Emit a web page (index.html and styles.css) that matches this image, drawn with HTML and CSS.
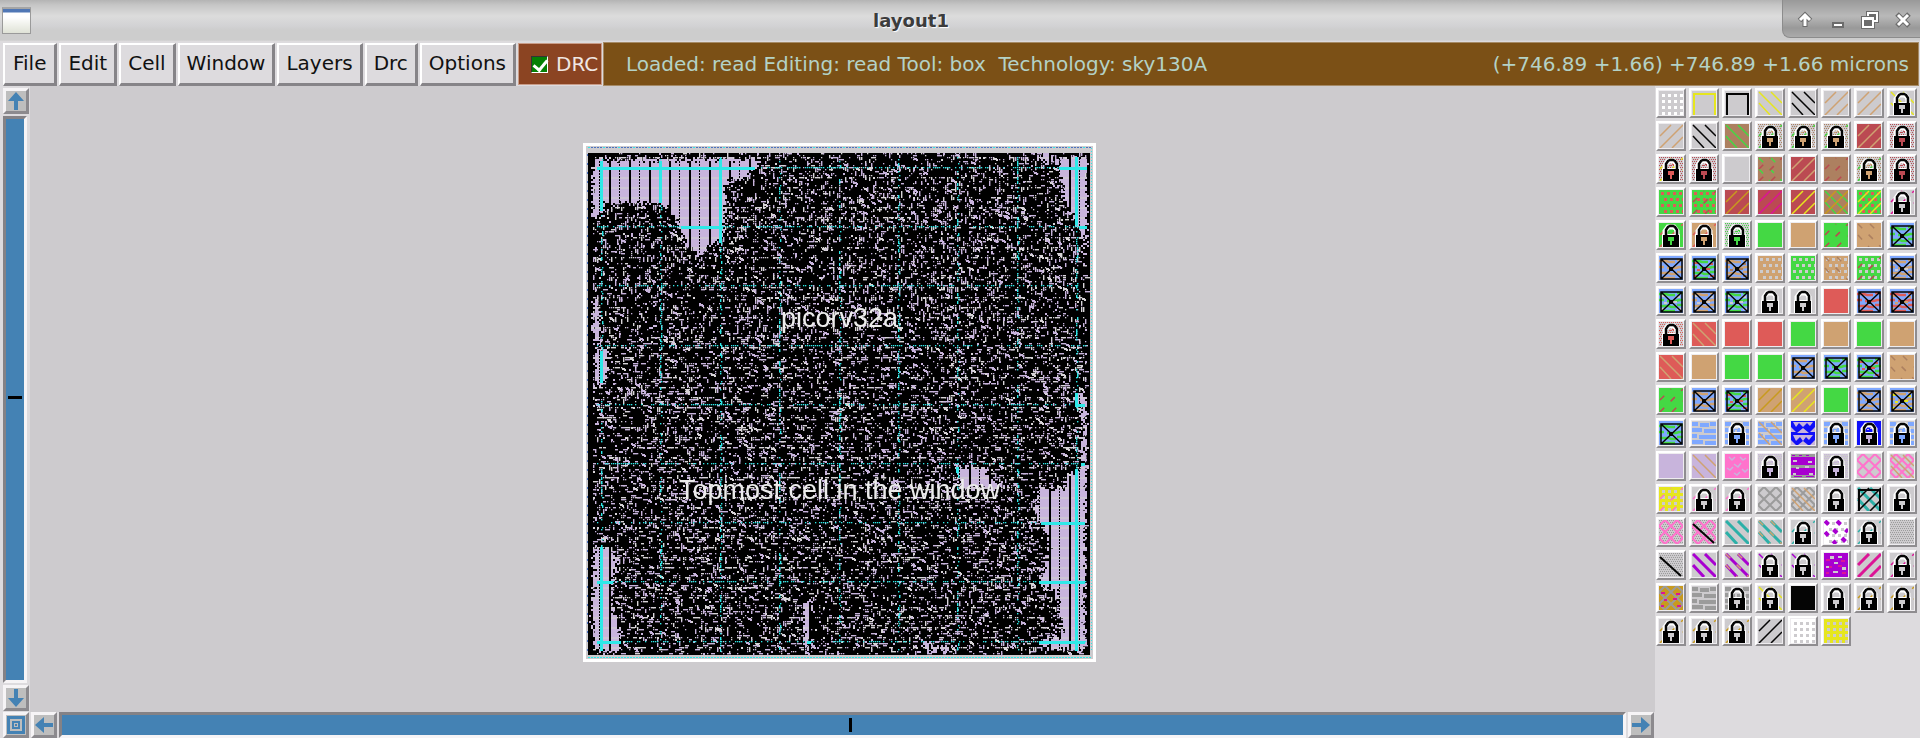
FILE: index.html
```html
<!DOCTYPE html>
<html lang="en">
<head>
<meta charset="utf-8">
<title>layout1</title>
<link rel="stylesheet" href="styles.css">
</head>
<body>
<header class="titlebar">
  <span class="app-icon"></span>
  <h1 class="title">layout1</h1>
  <div class="controls">
    <button class="control" aria-label="Shade"><svg viewBox="0 0 20 20"><path class="halo" d="M10 17V5M4.500 10.500 10 5l5.500 5.500"/><path class="line" d="M10 16V5M5 10l5-5 5 5"/></svg></button>
    <button class="control" aria-label="Minimize"><svg viewBox="0 0 20 20"><path class="edge" d="M4 12h12v6H4z"/><path class="solid" d="M6 14h8v2H6z"/></svg></button>
    <button class="control" aria-label="Restore"><svg viewBox="0 0 20 20"><path class="edge" d="M6 1h13v12h-4v6H1V6h5z"/><path class="ring" d="M8 6V3h9v8h-3M3 8h10v9H3z"/><path class="ring" d="M3 9h10"/></svg></button>
    <button class="control" aria-label="Close"><svg viewBox="0 0 20 20"><path class="halo" d="m4 4 12 12M16 4 4 16"/><path class="line" d="m5 5 10 10M15 5 5 15"/></svg></button>
  </div>
</header>
<nav class="menubar">
  <button class="menu">File</button>
  <button class="menu">Edit</button>
  <button class="menu">Cell</button>
  <button class="menu">Window</button>
  <button class="menu">Layers</button>
  <button class="menu">Drc</button>
  <button class="menu">Options</button>
  <label class="drc"><input type="checkbox" class="drc-box" checked>DRC</label>
  <div class="status">
    <span class="status-text">Loaded: read Editing: read Tool: box  Technology: sky130A</span>
    <span class="status-text">(+746.89 +1.66) +746.89 +1.66 microns</span>
  </div>
</nav>
<main class="workspace">
  <div class="rail">
    <button class="arrow" aria-label="Scroll up"><svg viewBox="0 0 20 20"><path d="M10 1l8 9h-6v9H8v-9H2z"/></svg></button>
    <div class="bar bar-v" role="scrollbar" aria-label="Vertical" aria-orientation="vertical" aria-controls="view" aria-valuenow="50"><span class="mark mark-v"></span></div>
    <button class="arrow" aria-label="Scroll down"><svg viewBox="0 0 20 20"><path d="M10 19l8-9h-6V1H8v9H2z"/></svg></button>
  </div>
  <section class="view" id="view">
    <div class="die">
      <canvas class="die-art" width="513" height="519"></canvas>
      <span class="cell-name">picorv32a</span>
      <span class="cell-note">Topmost cell in the window</span>
    </div>
  </section>
  <div class="foot">
    <button class="arrow" aria-label="Zoom to fit"><svg viewBox="0 0 20 20"><path d="M1 1h18v18H1zM4 4v12h12V4z" fill-rule="evenodd"/><path d="M6 6h8v8H6zM8 8v4h4V8z" fill-rule="evenodd"/><path d="M9 9h2v2H9z"/></svg></button>
    <button class="arrow" aria-label="Scroll left"><svg viewBox="0 0 20 20"><path d="M1 10l9-8v6h9v4h-9v6z"/></svg></button>
    <div class="bar bar-h" role="scrollbar" aria-label="Horizontal" aria-orientation="horizontal" aria-controls="view" aria-valuenow="50"><span class="mark mark-h"></span></div>
    <button class="arrow" aria-label="Scroll right"><svg viewBox="0 0 20 20"><path d="M19 10l-9-8v6H1v4h9v6z"/></svg></button>
  </div>
  <aside class="palette" id="palette" aria-label="Layers"></aside>
</main>
<script src="script.js"></script>
</body>
</html>
```
FILE: styles.css
```css
* { box-sizing: border-box; }
body {
  margin: 0;
  min-height: 100vh;
  display: flex;
  flex-direction: column;
  background: #dddbde;
  color: #111;
  font-family: "DejaVu Sans", sans-serif;
  font-size: 20px;
}
button { font: inherit; color: inherit; padding: 0; margin: 0; }

.titlebar {
  display: grid;
  grid-template-columns: 138px 1fr 138px;
  height: 42px;
  align-items: start;
  background: linear-gradient(#b4b4b4, #c6c6c6 5px, #dcdcdc 16px, #d2d2d4 26px, #cdcdcd 30px, #cdcdcd 40px, #e2e0e2 42px);
}
.app-icon {
  width: 29px;
  height: 27px;
  margin: 7px 2px;
  border: 1px solid #9a9a9a;
  border-top: 2px solid #a5a5a5;
  background: linear-gradient(#5077b5 3px, #fff 4px, #fff 8px, #dfe2d6);
}
.title {
  margin: 0;
  padding-right: 98px;
  font-size: 18px;
  line-height: 42px;
  text-align: center;
  color: #3c3c3c;
  text-shadow: 1px 1px 1px #fff;
}
.controls {
  display: flex;
  justify-content: space-between;
  align-items: center;
  height: 38px;
  padding: 2px 7px 0 12px;
  border: solid #8c8c8c;
  border-width: 0 0 1px 1px;
  border-bottom-left-radius: 8px;
  background: linear-gradient(#999, #b9b9b9 16px, #999 28px, #ababab);
}
.control { width: 20px; height: 20px; border: 0; background: none; display: flex; }
.control svg { width: 20px; height: 20px; fill: none; }
.halo { stroke: #6c6c6c; stroke-width: 5; }
.line { stroke: #fff; stroke-width: 3; }
.edge { fill: #6c6c6c; }
.solid { fill: #fff; }
.ring { stroke: #fff; stroke-width: 2; }

.menubar { display: flex; gap: 2px; padding: 0 1px 0 3px; height: 44px; }
.menu {
  padding: 0 7px 2px;
  margin-top: 1px;
  background: #dddbde;
  border: solid;
  border-color: #fff #868488 #868488 #fff;
  border-width: 2px 3px 3px 2px;
}
.menu:first-child { padding: 0 8px 2px; }
.drc {
  display: flex;
  align-items: center;
  gap: 8px;
  width: 84px;
  padding: 0 4px 0 12px;
  margin: 1px 0;
  background: #8b4422;
  border: 1px solid #c99c88;
  color: #f0e6e2;
}
.drc-box {
  appearance: none;
  width: 17px;
  height: 17px;
  margin: 0;
  flex: none;
  border: 1px solid;
  border-color: #333 #fff #fff #333;
  background: #058005;
  position: relative;
}
.drc-box:checked::after {
  content: "";
  position: absolute;
  left: 4px;
  top: 0;
  width: 6px;
  height: 11px;
  border: solid #fff;
  border-width: 0 3px 3px 0;
  transform: rotate(40deg);
}
.status {
  flex: 1;
  display: flex;
  justify-content: space-between;
  align-items: center;
  padding: 0 9px 0 22px;
  margin-left: -1px;
  background: #7b5016;
  border: 1px solid #a58a66;
  color: #b4d2c6;
}
.status-text { white-space: pre; }

.workspace {
  flex: 1;
  display: grid;
  grid-template-columns: 30px 1fr 265px;
  grid-template-rows: 1fr 26px;
}
.rail { display: flex; flex-direction: column; gap: 2px; padding: 2px 0 1px 3px; background: #dddbde; }
.view { background: #cdcbce; display: grid; place-content: center; padding: 7px 6px 0 0; }
.foot { grid-column: 1 / 3; grid-row: 2; display: flex; gap: 2px; padding: 0 1px 0 3px; }
.palette {
  grid-column: 3;
  grid-row: 1 / 3;
  display: grid;
  grid-template-columns: repeat(8, 30px);
  gap: 3px;
  align-content: start;
  padding: 2px 0 0 1px;
}
.arrow {
  flex: none;
  width: 26px;
  height: 26px;
  padding: 0;
  background: #bebebe;
  border: 3px solid;
  border-color: #f6f4f6 #8c8a8e #8c8a8e #f6f4f6;
  display: flex;
}
.arrow svg { width: 20px; height: 20px; fill: #4482b4; }
.bar {
  flex: 1;
  display: flex;
  align-items: center;
  justify-content: center;
  background: #4482b4;
  border: 3px solid;
  border-color: #848286 #f6f4f6 #f6f4f6 #848286;
}
.bar-v { width: 24px; padding-bottom: 4px; }
.bar-h { padding-left: 16px; }
.mark { background: #000; }
.mark-v { width: 14px; height: 3px; }
.mark-h { width: 3px; height: 14px; }

.die { position: relative; }
.die-art { display: block; }
.cell-name, .cell-note {
  position: absolute;
  left: 0;
  width: 100%;
  text-align: center;
  font-family: "Liberation Sans", sans-serif;
  font-size: 27px;
  line-height: 30px;
  color: #ececec;
}
.cell-name { top: 160px; }
.cell-note { top: 332px; }

.swatch {
  width: 30px;
  height: 30px;
  padding: 1px;
  background: #eeecef;
  border: 2px solid;
  border-color: #fff #8f8d90 #8f8d90 #fff;
}
.swatch svg { display: block; width: 24px; height: 24px; }
```
FILE: script.js
```js
const INK = {
  A: '#cdcbce', G: '#44d844', T: '#cfa272', B: '#ad8060', R: '#bb4a52', S: '#de5b58',
  U: '#7fa8ff', Y: '#e6e61e', K: '#050505', L: '#c8b4dc', P: '#ff73cc', V: '#a800d0',
  M: '#dc1496', C: '#2cb0a8', W: '#ffffff', D: '#9b9b9b', O: '#c89a1e', N: '#1010f8'
};

const line = (d, c, w, dash) =>
  `<path d="${d}" fill="none" stroke="${c}" stroke-width="${w}"${dash ? ` stroke-dasharray="${dash}"` : ''}/>`;
const SLASH = 'M1 12 12 1M1 24 24 1M13 24 24 13';
const BACK = 'M1 12 12 24M1 1 24 24M13 1 24 12';

function grid(c, size, pitch, shift, start) {
  let d = '';
  for (let r = 0; r * pitch + start < 24; r++) {
    for (let k = 0; k * pitch + start < 24; k++) {
      d += `M${k * pitch + start + (r % 2 ? shift : 0)} ${r * pitch + start}h${size}v${size}h-${size}z`;
    }
  }
  return `<path d="${d}" fill="${c}"/>`;
}

/* One letter per pattern, followed by its ink letter. */
const DRAW = {
  f: c => `<path d="M0 0h24v24H0z" fill="${c}"/>`,
  '/': c => line(SLASH, c, 1.500),
  '\\': c => line(BACK, c, 1.500),
  s: c => line(SLASH, c, 1.500, '6 9'),
  b: c => line(BACK, c, 1.500, '6 9'),
  z: c => line(BACK, c, 3),
  y: c => line(SLASH, c, 3),
  Z: c => line(BACK, c, 4, '5 7'),
  '1': c => line('M1 4 22 23', c, 2),
  d: c => grid(c, 3, 6, 0, 3),
  D: c => grid(c, 3, 6, 3, 2),
  c: c => grid(c, 1, 2, 1, 0),
  x: c => line('M0 6 6 0 24 18 18 24 0 6M0 18 18 0 24 6 6 24z', c, 2),
  t: c => line('M2 24V3h21v21', c, 2),
  w: c => line('M0 5h7l3 1h6M18 4h6M0 11h5M8 12h9l3-1h4M1 17h9l2 1h5M18 16h6M4 22h12', c, 2.500),
  W: c => line('M2 7h4M17 8h4M5 14h3M14 13h4M2 20h3M18 20h4', c, 2),
  h: c => line('M0 3h6M8 4h9M18 3h6M0 9h10M12 10h12M0 15h5M7 16h17M0 21h11M13 22h11', c, 4),
  v: c => `<path d="M2 1h20l-3 4-3-3-4 4-4-4-3 4zM0 6l5 5H0zM24 6v5h-5zM6 12l6-5 6 5zM2 14h20l-4 5-3-3-3 4-3-4-4 4zM0 24v-5l5 5zM24 24v-5l-5 5zM7 24l5-4 5 4z" fill="${c}"/>`,
  q: c => `<path d="M0 3h24v8H0zM0 14h24v7H0zM1 1h3v1H1zM8 1h3v1H8zM15 1h3v1h-3zM3 22h8v1H3zM15 22h8v1h-8z" fill="${c}"/>`,
  k: c => `<path d="M6 3h4v3H6zM14 3h4v2h-4zM10 9h4v2h-4zM2 13h4v2H2zM18 14h4v3h-4zM9 18h5v2H9z" fill="${c}"/>`,
  u: c => line('M4 3l3 3 3-3M15 3l3 3 3-2M9 10l4 3 3-4M2 14l3 2 3-3M17 15l3 3 3-3M9 19l3 2 3-3', c, 1.500),
  X: c => line('M2 23V3h21v20zM2 3l21 20M23 3 2 23', c, 1.500) + `<path d="M10 11h4v4h-4z" fill="${c}"/>`,
  l: c => line('M6 13V8l3-4h6l3 4v5', '#fff', 5) +
    '<path d="M3 11h18v13H3z" fill="#fff"/>' +
    line('M7 12V7l2-3 2-1h3l2 1 2 3v5', '#050505', 2.500) +
    `<path d="M10 8h2v1h-2zM13 7h2v1h-2z" fill="${c}"/>` +
    '<path d="M4 12h16v12H4z" fill="#000"/>' +
    `<path d="M9 14h6v4h-2v4h-2v-4H9z" fill="${c}"/>`
};

const LAYERS = `
dW tY tK \\Y \\K /T /T \\YlA
/T \\K fB\\G cBsGlT cBsGlT cBsGlT fR/T cRlR
cRsYlS cRlR fA fBbGsR fR/T fBsR cBsGlT cRlR
fGDS fGDSsR fR/O fR/M fR/Y fB\\G/O fGDS/Y sMlA
fGsSlG fTsSlT cGlG fG fT fGsR fTbB fUwGXK
fUwTXK fUwGWSXK fUwTWBXK fTDA fGDA fTDAbB fGDAsR fUwTWAXK
fUwGWAXK fUwTWAXK fUwGWAXK lA lA fS fUwSXK fUwSWTXK
cSlS fS\\T fS fS fG fT fG fT
fS\\T fT fG fG fUwTXK fUwGXK fUwGWSXK fTbB
fGsR fUwTXK fUwGWSXK fT/O fT/Y fG fUwTXK fUwTWYXK
fUwGXK hU hUlU hU\\T fNvL hUlU fNlL hUlU
fL fL\\T fPuL cLlL fDqVWA cLlL xP xP\\T
fYdAsP sPlA sPlA xD xD\\T lA zC/KtK lA
cDxP cDxP1K zC zCbT sClA fWDAZV sClA cD
cD1K zV zVbT bVlA bVlA fVkAWM yM sMlA
fOxDWM hD hDlA \\YlA fK lA sOlA sOlA
sOlA sOlA sOlA /K fWdA fYdA`;

function swatch(code) {
  let art = DRAW.f(INK.A);
  for (let i = 0; i < code.length; i += 2) art += DRAW[code[i]](INK[code[i + 1]]);
  return `<svg viewBox="0 0 24 24" aria-hidden="true">${art}</svg>`;
}
document.getElementById('palette').innerHTML = LAYERS.trim().split(/\s+/)
  .map((code, i) => `<button class="swatch" aria-label="Layer ${i + 1}">${swatch(code.replace(/\\\\/g, '\\'))}</button>`)
  .join('');

/* Die view: routed area, empty filler areas and power straps. */
let seed = 7;
const rnd = () => {
  seed = (seed * 1664525 + 1013904223) >>> 0;
  return seed / 4294967296;
};
const ctx = document.querySelector('.die-art').getContext('2d');
const box = (c, x, y, w, h) => { ctx.fillStyle = c; ctx.fillRect(x, y, w, h); };
const LAV = '#c8b4dc', GREY = '#cdcbce', CYAN = '#2ee8e8';

box('#fff', 0, 0, 513, 519);
box(GREY, 3, 3, 507, 513);
box('#000', 5, 10, 502, 502);

const FILLER = [
  [[9, 17], [9, 72], [16, 74], [21, 59], [77, 59], [87, 69], [97, 82], [99, 95], [107, 107], [115, 110], [125, 100], [138, 98], [143, 37], [157, 35], [173, 22], [177, 15]],
  [[473, 14], [477, 37], [483, 62], [491, 75], [495, 85], [499, 97], [502, 119], [503, 97], [503, 14]],
  [[447, 10], [468, 10], [470, 20], [455, 17]],
  [[9, 157], [14, 157], [17, 202], [10, 202]],
  [[10, 207], [25, 207], [23, 232], [12, 247]],
  [[491, 250], [502, 250], [502, 322], [498, 322], [497, 262], [491, 262]],
  [[452, 344], [452, 377], [460, 380], [466, 404], [462, 424], [455, 437], [460, 445], [472, 447], [478, 480], [478, 494], [455, 495], [457, 504], [500, 507], [502, 322], [495, 324], [483, 334], [479, 344]],
  [[373, 322], [400, 323], [405, 335], [426, 344], [376, 344]],
  [[11, 402], [23, 404], [35, 417], [30, 430], [27, 457], [32, 474], [37, 494], [35, 507], [13, 507], [8, 480]],
  [[221, 457], [227, 457], [227, 507], [223, 502], [219, 477]],
  [[338, 499], [371, 502], [366, 507], [341, 507]]
];
const inside = (p, x, y) => {
  let hit = false;
  for (let i = 0, j = p.length - 1; i < p.length; j = i++) {
    const [a, b] = p[i], [c, d] = p[j];
    if ((b > y) !== (d > y) && x < (c - a) * (y - b) / (d - b) + a) hit = !hit;
  }
  return hit;
};
const filler = (x, y) => FILLER.some(p => inside(p, x, y));

for (let y = 10; y < 511; y += 2) {
  const rail = y % 10 === 4;
  for (let x = 6; x < 506; x += 2) {
    const fx = x + (rnd() - 0.5) * 6, fy = y + (rnd() - 0.5) * 6;
    if (filler(fx, fy)) {
      box(rail ? '#cdc4d4' : LAV, x, y, 2, 2);
      continue;
    }
    const p = rail ? 0.380 : 0.200;
    if (x < 9 || x > 502 || rnd() > p) continue;
    const c = rnd() < (rail ? 0.300 : 0.800) ? LAV : '#d8d4d8';
    const kind = rnd();
    const flat = y > 190 ? 0.260 : 0.140;
    if (kind < flat) box(c, x, y, 3 + Math.floor(rnd() * 3), 1.400);
    else if (kind < 0.400) box(c, x, y, 1.400, 3 + Math.floor(rnd() * 3));
    else if (kind < 0.520) box(c, x, y, 2, 2);
    else box(c, x, y, 1.300, 1.300);
    if (rnd() < 0.040) { box(c, x + 1, y + 1, 3, 2); box(c, x + 3, y + 2, 2, 2); }
  }
}

/* Cell row ends cut dotted columns into the filler. */
for (let x = 16, n = 0; x < 505; x += 10, n++) {
  for (let y = 12; y < 510; y += 3) {
    if (!filler(x, y)) continue;
    if (n % 2) box('#000', x, y, 2, 3);
    else box('#000', x, y, 1, 2);
  }
}

for (let i = 0; i < 9; i++) {
  const at = 18 + Math.round(i * 59.400), row = 24 + Math.round(i * 59.200);
  for (let t = 14; t < 508; t += 2) {
    if (filler(at, t)) box(CYAN, at - 1, t, 3, 2);
    else if (rnd() < 0.420) box(CYAN, at + (rnd() < 0.300 ? 1 : 0), t, 1.400, rnd() < 0.200 ? 3 : 1.400);
    if (t < 504 && filler(t, row)) box(CYAN, t, row, 2, 3);
    else if (t < 504 && rnd() < 0.500) box(CYAN, t, row, 1.300, 1.300);
  }
}
for (let t = 5; t < 509; t += 3) {
  box(t % 5 ? '#4a72c0' : CYAN, t, 4, 2, 1);
  box(CYAN, t, 514, 2, 1);
  box(CYAN, 508, t, 1, 1);
  if (t % 9 === 2) box('#4a72c0', 4, t, 1, 2);
}
```
